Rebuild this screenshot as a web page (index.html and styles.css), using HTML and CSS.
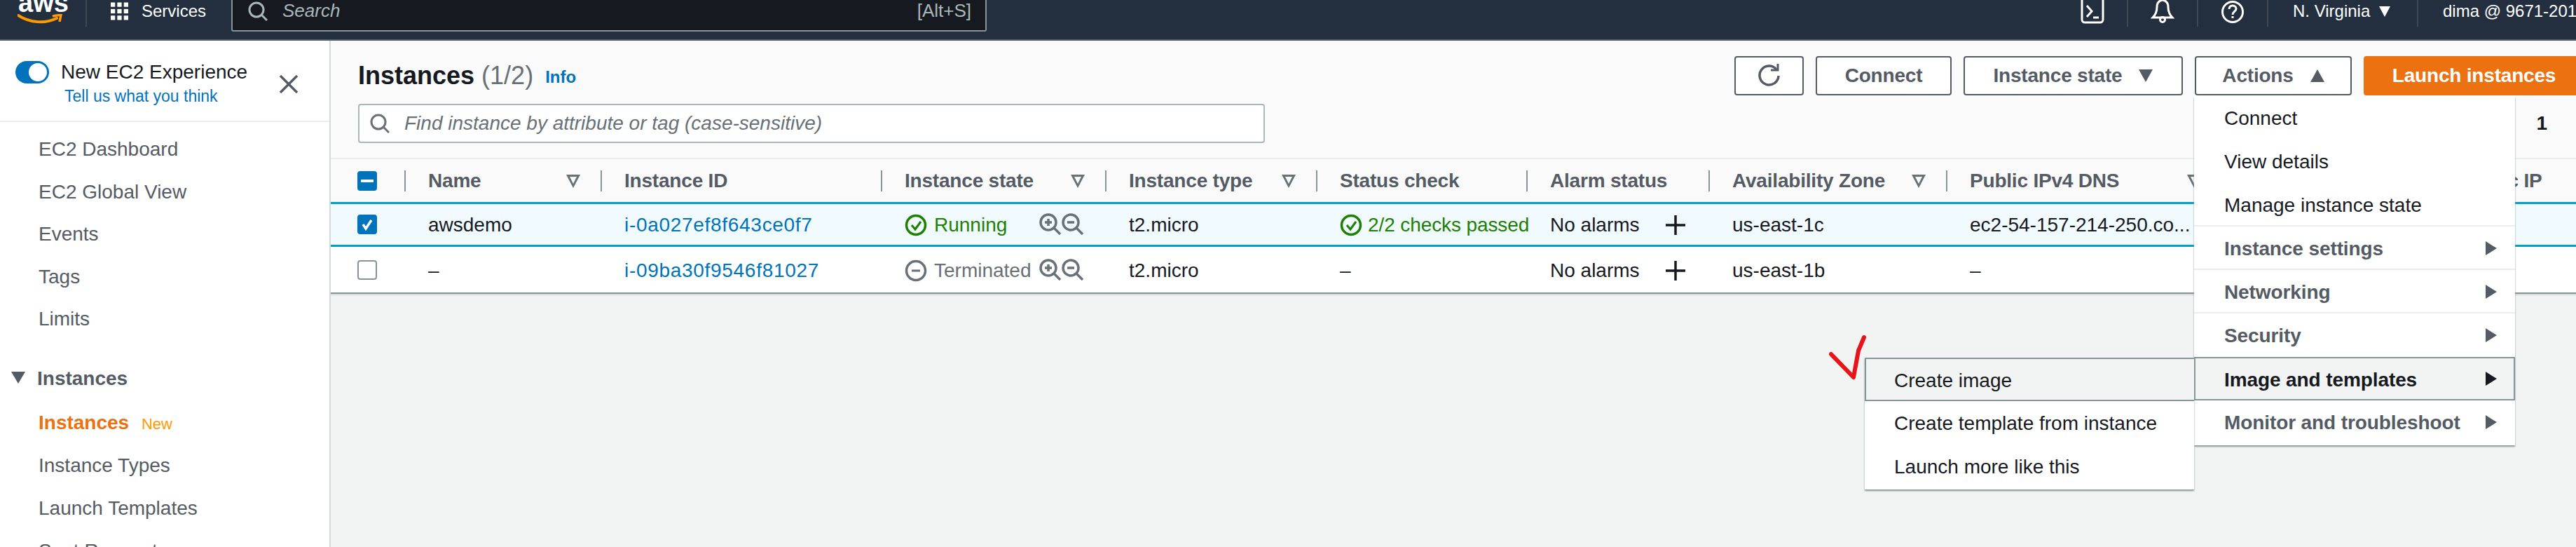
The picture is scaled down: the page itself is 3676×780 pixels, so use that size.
FILE: index.html
```html
<!DOCTYPE html>
<html>
<head>
<meta charset="utf-8" />
<title>Instances | EC2 Management Console</title>
<link rel="stylesheet" href="styles.css">
</head>
<body>

<header class="topbar">
  <div class="logo">
    <span class="logo-text">aws</span>
    <svg class="logo-smile" width="64" height="15" viewBox="0 0 64 15"><path d="M1 2C18 13 40 14 56 6" fill="none" stroke="#f90" stroke-width="4" stroke-linecap="round"/><path d="M50 3L62 1L60 11" fill="none" stroke="#f90" stroke-width="3.5"/></svg>
  </div>
  <div class="services">
    <svg width="32" height="32" viewBox="0 0 32 32" fill="#fff"><rect x="0" y="0" width="8" height="8"/><rect x="12" y="0" width="8" height="8"/><rect x="24" y="0" width="8" height="8"/><rect x="0" y="12" width="8" height="8"/><rect x="12" y="12" width="8" height="8"/><rect x="24" y="12" width="8" height="8"/><rect x="0" y="24" width="8" height="8"/><rect x="12" y="24" width="8" height="8"/><rect x="24" y="24" width="8" height="8"/></svg>
    <span>Services</span>
  </div>
  <div class="top-search">
    <svg width="28" height="28" viewBox="0 0 28 28" fill="none" stroke="#aab7b8" stroke-width="3"><circle cx="12" cy="12" r="10"/><path d="M19 19l8 8"/></svg>
    <span class="top-search-text">Search</span>
    <span class="top-search-key">[Alt+S]</span>
  </div>
  <div class="top-right">
    <div class="top-icon">
      <svg width="34" height="34" viewBox="0 0 34 34" fill="none" stroke="#fff" stroke-width="3"><rect x="2" y="-4" width="30" height="36" rx="4"/><path d="M9 8l7 8-7 8"/><path d="M18 25h8"/></svg>
    </div>
    <div class="top-icon">
      <svg width="34" height="34" viewBox="0 0 34 34" fill="none" stroke="#fff" stroke-width="3"><path d="M17 0c-6 1-8 5-8 10 0 6-1 10-6 15h28c-5-5-6-9-6-15 0-5-2-9-8-10z"/><circle cx="17" cy="28" r="3.5"/></svg>
    </div>
    <div class="top-icon">
      <svg width="34" height="34" viewBox="0 0 34 34" fill="none" stroke="#fff" stroke-width="3"><circle cx="17" cy="17" r="14.5"/><path d="M12 13c0-3 2-5 5-5s5 2 5 4.500c0 4-5 4-5 8.500"/><path d="M17 23v3"/></svg>
    </div>
    <div class="region"><span>N. Virginia</span><i class="caret-white"></i></div>
    <div class="account">dima @ 9671-2017-0000</div>
  </div>
</header>

<div class="layout">
  <aside class="sidebar">
    <div class="exp">
      <div class="exp-text">
        <div class="exp-row">
          <span class="toggle"><i></i></span>
          <span class="exp-title">New EC2 Experience</span>
        </div>
        <a class="exp-link">Tell us what you think</a>
      </div>
      <svg class="exp-close" width="28" height="26" viewBox="0 0 28 26" fill="none" stroke="#545b64" stroke-width="3.500"><path d="M2 1l24 24M26 1L2 25"/></svg>
    </div>
    <nav class="nav">
      <a class="nav-item">EC2 Dashboard</a>
      <a class="nav-item">EC2 Global View</a>
      <a class="nav-item">Events</a>
      <a class="nav-item">Tags</a>
      <a class="nav-item">Limits</a>
      <div class="nav-group"><i class="caret-nav"></i><span>Instances</span></div>
      <a class="nav-sub active">Instances <span class="new">New</span></a>
      <a class="nav-sub">Instance Types</a>
      <a class="nav-sub">Launch Templates</a>
      <a class="nav-sub">Spot Requests</a>
    </nav>
  </aside>

  <main class="content">
    <section class="panel-top">
      <div class="title-row">
        <h1>Instances <span class="count">(1/2)</span></h1>
        <a class="info">Info</a>
        <div class="actions">
          <button class="btn btn-refresh" type="button">
            <svg width="34" height="34" viewBox="0 0 34 34" fill="none" stroke="#545b64" stroke-width="3.500"><path d="M27 8a13.500 13.500 0 1 0 3 9"/><path d="M19 9h10V0" stroke-width="3"/></svg>
          </button>
          <button class="btn btn-connect" type="button">Connect</button>
          <button class="btn btn-state" type="button">Instance state <i class="caret-down"></i></button>
          <button class="btn btn-actions" type="button">Actions <i class="caret-up"></i></button>
          <button class="btn btn-launch" type="button">Launch instances</button>
        </div>
      </div>
      <div class="filter-row">
        <div class="filter">
          <svg width="28" height="28" viewBox="0 0 28 28" fill="none" stroke="#687078" stroke-width="3"><circle cx="12" cy="12" r="10"/><path d="M19 19l8 8"/></svg>
          <span>Find instance by attribute or tag (case-sensitive)</span>
        </div>
        <span class="page-num">1</span>
      </div>
    </section>

    <section class="table">
      <div class="row head">
        <div class="cell cell-check"><span class="check mixed"><i></i></span></div>
        <div class="cell sep">Name<i class="filter-mark"></i></div>
        <div class="cell sep">Instance ID</div>
        <div class="cell sep">Instance state<i class="filter-mark"></i></div>
        <div class="cell sep">Instance type<i class="filter-mark"></i></div>
        <div class="cell sep">Status check</div>
        <div class="cell sep">Alarm status</div>
        <div class="cell sep">Availability Zone<i class="filter-mark"></i></div>
        <div class="cell sep">Public IPv4 DNS<i class="filter-mark"></i></div>
        <div class="cell sep">Public IPv4</div>
        <div class="cell sep">Elastic IP</div>
      </div>

      <div class="row selected">
        <div class="cell cell-check"><span class="check on"><svg width="20" height="20" viewBox="0 0 20 20" fill="none" stroke="#fff" stroke-width="3.500"><path d="M4 10l4 6 8-12"/></svg></span></div>
        <div class="cell">awsdemo</div>
        <div class="cell link">i-0a027ef8f643ce0f7</div>
        <div class="cell state green">
          <svg width="32" height="32" viewBox="0 0 32 32" fill="none" stroke="#1d8102" stroke-width="3.500"><circle cx="16" cy="16" r="13.500"/><path d="M10 16l5 6 8-11" stroke-width="3"/></svg>
          <span>Running</span>
          <span class="zooms">
            <svg width="32" height="32" viewBox="0 0 32 32" fill="none" stroke="#687078" stroke-width="3.500"><circle cx="13" cy="13" r="11"/><path d="M21 21l9 9M13 8v10M8 13h10"/></svg>
            <svg width="32" height="32" viewBox="0 0 32 32" fill="none" stroke="#687078" stroke-width="3.500"><circle cx="13" cy="13" r="11"/><path d="M21 21l9 9M8 13h10"/></svg>
          </span>
        </div>
        <div class="cell">t2.micro</div>
        <div class="cell state green checks">
          <svg width="32" height="32" viewBox="0 0 32 32" fill="none" stroke="#1d8102" stroke-width="3.500"><circle cx="16" cy="16" r="13.500"/><path d="M10 16l5 6 8-11" stroke-width="3"/></svg>
          <span>2/2 checks passed</span>
        </div>
        <div class="cell alarm">No alarms<svg class="plus" width="30" height="30" viewBox="0 0 30 30" stroke="#16191f" stroke-width="3.500"><path d="M15 1v28M1 15h28"/></svg></div>
        <div class="cell">us-east-1c</div>
        <div class="cell">ec2-54-157-214-250.co...</div>
        <div class="cell"></div>
        <div class="cell"></div>
      </div>

      <div class="row last">
        <div class="cell cell-check"><span class="check"></span></div>
        <div class="cell">–</div>
        <div class="cell link">i-09ba30f9546f81027</div>
        <div class="cell state grey">
          <svg width="32" height="32" viewBox="0 0 32 32" fill="none" stroke="#687078" stroke-width="3.500"><circle cx="16" cy="16" r="13.500"/><path d="M10 16h12" stroke-width="3"/></svg>
          <span>Terminated</span>
          <span class="zooms">
            <svg width="32" height="32" viewBox="0 0 32 32" fill="none" stroke="#687078" stroke-width="3.500"><circle cx="13" cy="13" r="11"/><path d="M21 21l9 9M13 8v10M8 13h10"/></svg>
            <svg width="32" height="32" viewBox="0 0 32 32" fill="none" stroke="#687078" stroke-width="3.500"><circle cx="13" cy="13" r="11"/><path d="M21 21l9 9M8 13h10"/></svg>
          </span>
        </div>
        <div class="cell">t2.micro</div>
        <div class="cell">–</div>
        <div class="cell alarm">No alarms<svg class="plus" width="30" height="30" viewBox="0 0 30 30" stroke="#16191f" stroke-width="3.500"><path d="M15 1v28M1 15h28"/></svg></div>
        <div class="cell">us-east-1b</div>
        <div class="cell">–</div>
        <div class="cell"></div>
        <div class="cell"></div>
      </div>
    </section>
  </main>
</div>

<!-- actions dropdown, open on "Image and templates" -->
<div class="menu">
  <a class="menu-item">Connect</a>
  <a class="menu-item">View details</a>
  <a class="menu-item divided">Manage instance state</a>
  <a class="menu-item parent divided">Instance settings<i class="caret-right"></i></a>
  <a class="menu-item parent divided">Networking<i class="caret-right"></i></a>
  <a class="menu-item parent">Security<i class="caret-right"></i></a>
  <a class="menu-item parent open">Image and templates<i class="caret-right"></i></a>
  <a class="menu-item parent">Monitor and troubleshoot<i class="caret-right"></i></a>

  <div class="submenu">
    <a class="menu-item hover">Create image</a>
    <a class="menu-item">Create template from instance</a>
    <a class="menu-item">Launch more like this</a>
  </div>
</div>

<svg class="red-check" width="54" height="66" viewBox="0 0 54 66" fill="none" stroke="#e8141a" stroke-width="6" stroke-linecap="round" stroke-linejoin="round"><path d="M3 27L35 60L42 22L50 3"/></svg>

</body>
</html>
```

FILE: styles.css
```css
html, body {
  margin: 0;
  padding: 0;
  width: 3676px;
  height: 780px;
  overflow: hidden;
  background: #f2f3f3;
  font-family: "Liberation Sans", Arial, sans-serif;
  font-size: 28px;
  color: #16191f;
}
body {
  position: relative;
}
a { display: block; }
i { display: block; }

/* top bar */
.topbar {
  display: flex;
  height: 56px;
  background: #232f3e;
  border-bottom: 2px solid #545b64;
  color: #fff;
  font-size: 24px;
}
.logo {
  position: relative;
  width: 122px;
  height: 38px;
  border-right: 2px solid #414750;
  flex-shrink: 0;
}
.logo-text {
  position: absolute;
  left: 26px;
  top: -15px;
  font-size: 38px;
  line-height: 38px;
  font-weight: bold;
}
.logo-smile {
  position: absolute;
  left: 25px;
  top: 20px;
}
.services {
  display: flex;
  align-items: center;
  gap: 19px;
  width: 170px;
  height: 32px;
  padding-left: 34px;
  box-sizing: border-box;
  flex-shrink: 0;
}
.top-search {
  display: flex;
  align-items: center;
  width: 1078px;
  height: 45px;
  box-sizing: border-box;
  padding: 0 20px 12px 22px;
  background: #16191f;
  border: 2px solid #879596;
  border-top: none;
  border-radius: 0 0 3px 3px;
  color: #aab7b8;
  font-size: 26px;
  flex-shrink: 0;
  margin-left: 36px;
}
.top-search-text {
  font-style: italic;
  margin-left: 21px;
  flex: 1;
}
.top-right {
  display: flex;
  margin-left: auto;
  height: 38px;
}
.top-icon {
  width: 100px;
  height: 38px;
  box-sizing: border-box;
  border-right: 2px solid #414750;
  display: flex;
  justify-content: center;
  align-items: flex-start;
  margin-right: 0;
}
.region {
  display: flex;
  gap: 13px;
  align-items: center;
  width: 214px;
  height: 38px;
  padding: 0 0 6px 35px;
  box-sizing: border-box;
  border-right: 2px solid #414750;
}
.account {
  width: 225px;
  padding-left: 35px;
  box-sizing: border-box;
  white-space: nowrap;
  overflow: hidden;
  line-height: 32px;
}
.caret-white {
  width: 0;
  height: 0;
  border-left: 8px solid transparent;
  border-right: 8px solid transparent;
  border-top: 15px solid #fff;
}

.layout {
  display: flex;
  height: 722px;
}

/* left nav */
.sidebar {
  width: 472px;
  box-sizing: border-box;
  flex-shrink: 0;
  background: #fff;
  border-right: 2px solid #d5dbdb;
  color: #545b64;
}
.exp {
  display: flex;
  height: 116px;
  box-sizing: border-box;
  padding: 28px 0 0 22px;
  border-bottom: 2px solid #eaeded;
}
.exp-text {
  width: 376px;
}
.exp-row {
  display: flex;
  align-items: center;
  gap: 17px;
  height: 34px;
}
.toggle {
  display: block;
  position: relative;
  width: 48px;
  height: 32px;
  border-radius: 16px;
  background: #0073bb;
}
.toggle i {
  position: absolute;
  right: 3px;
  top: 3px;
  width: 26px;
  height: 26px;
  border-radius: 50%;
  background: #fff;
}
.exp-title {
  color: #16191f;
}
.exp-link {
  margin: 2px 0 0 70px;
  color: #0073bb;
  font-size: 23px;
  line-height: 30px;
}
.exp-close {
  margin-top: 21px;
}
.nav {
  padding-top: 7px;
}
.nav-item {
  height: 60.5px;
  line-height: 63px;
  padding-left: 55px;
}
.nav-group {
  display: flex;
  align-items: center;
  gap: 17px;
  height: 62px;
  margin: 24px 0 1px;
  padding-left: 16px;
  font-weight: bold;
}
.nav-group span {
  padding-top: 2px;
}
.caret-nav {
  width: 0;
  height: 0;
  border-left: 10px solid transparent;
  border-right: 10px solid transparent;
  border-top: 17px solid #545b64;
}
.nav-sub {
  height: 61px;
  line-height: 64px;
  padding-left: 55px;
}
.active {
  color: #ec7211;
  font-weight: bold;
}
.new {
  margin-left: 10px;
  font-size: 22px;
  font-weight: normal;
  color: #f90;
}

/* main */
.content {
  flex: 1;
  min-width: 0;
}
.panel-top {
  height: 169px;
  box-sizing: border-box;
  padding: 22px 0 0 39px;
  background: #fafafa;
  border-bottom: 2px solid #eaeded;
}
.title-row {
  display: flex;
  align-items: center;
  height: 56px;
}
h1 {
  margin: 0;
  font-size: 36px;
  font-weight: bold;
  white-space: nowrap;
}
.count {
  font-weight: normal;
  color: #687078;
}
.info {
  margin: 4px 0 0 17px;
  font-size: 24px;
  font-weight: bold;
  color: #0073bb;
}
.actions {
  display: flex;
  gap: 17px;
  margin-left: auto;
  margin-right: -12px;
}
.btn {
  display: flex;
  align-items: center;
  justify-content: center;
  gap: 24px;
  height: 56px;
  box-sizing: border-box;
  padding: 0;
  background: #fff;
  border: 2px solid #545b64;
  border-radius: 4px;
  font: bold 28px "Liberation Sans", Arial, sans-serif;
  letter-spacing: -0.2px;
  color: #545b64;
  white-space: nowrap;
}
.btn-refresh { width: 99px; }
.btn-connect { width: 194px; }
.btn-state { width: 313px; }
.btn-actions { width: 224px; }
.btn-launch {
  width: 315px;
  background: #ec7211;
  border-color: #ec7211;
  color: #fff;
}
.caret-down {
  width: 0;
  height: 0;
  border-left: 10px solid transparent;
  border-right: 10px solid transparent;
  border-top: 18px solid #545b64;
}
.caret-up {
  width: 0;
  height: 0;
  border-left: 10px solid transparent;
  border-right: 10px solid transparent;
  border-bottom: 18px solid #545b64;
}
.filter-row {
  display: flex;
  align-items: center;
  justify-content: space-between;
  margin-top: 12px;
  padding-right: 41px;
}
.filter {
  display: flex;
  align-items: center;
  gap: 21px;
  width: 1294px;
  height: 56px;
  box-sizing: border-box;
  padding-left: 15px;
  background: #fff;
  border: 2px solid #aab7b8;
  border-radius: 4px;
  font-style: italic;
  color: #687078;
}
.page-num {
  font-weight: bold;
  color: #16191f;
}

/* instances table */
.row {
  display: grid;
  grid-template-columns: 105px 280px 400px 320px 301px 300px 260px 339px 393px 301px 300px;
  background: #fff;
  height: 63px;
  box-sizing: border-box;
  align-items: center;
}
.head {
  height: 61px;
  background: #fafafa;
  font-weight: bold;
  letter-spacing: -0.2px;
  color: #545b64;
}
.selected {
  height: 64px;
  background: #f1faff;
  border-top: 3px solid #00a1c9;
  border-bottom: 3px solid #00a1c9;
}
.last {
  height: 67px;
  border-bottom: 2px solid #879596;
  box-shadow: 0 2px 1px #d5dbdb;
}
.cell {
  display: flex;
  align-items: center;
  position: relative;
  padding-left: 34px;
  box-sizing: border-box;
  white-space: nowrap;
}
.selected .cell, .last .cell {
  padding-top: 2px;
}
.selected .cell-check, .last .cell-check {
  padding-top: 0;
}
.cell-check {
  padding-left: 38px;
}
.sep {
  height: 30px;
  border-left: 2px solid #879596;
  padding-left: 32px;
}
.check {
  display: flex;
  align-items: center;
  justify-content: center;
  width: 28px;
  height: 28px;
  box-sizing: border-box;
  background: #fff;
  border: 2px solid #879596;
  border-radius: 4px;
}
.on, .mixed {
  background: #0073bb;
  border-color: #0073bb;
}
.mixed i {
  width: 18px;
  height: 4px;
  background: #fff;
}
.filter-mark {
  position: absolute;
  right: 29px;
  top: 6px;
  width: 0;
  height: 0;
  border-left: 10px solid transparent;
  border-right: 10px solid transparent;
  border-top: 19px solid #687078;
}
.filter-mark::after {
  content: "";
  position: absolute;
  left: -5px;
  top: -16px;
  width: 0;
  height: 0;
  border-left: 5px solid transparent;
  border-right: 5px solid transparent;
  border-top: 10px solid #fafafa;
}
.link {
  color: #0073bb;
  letter-spacing: 0.7px;
}
.state {
  gap: 10px;
}
.state svg {
  flex-shrink: 0;
}
.checks {
  gap: 8px;
  letter-spacing: -0.1px;
}
.green { color: #1d8102; }
.grey { color: #687078; }
.zooms {
  position: absolute;
  left: 226px;
  top: 50%;
  margin-top: -16px;
  display: flex;
  height: 32px;
}
.alarm {
  justify-content: flex-start;
}
.plus {
  margin-left: 36px;
}

/* dropdown */
.menu {
  position: absolute;
  left: 3131px;
  top: 137px;
  width: 458px;
  padding-bottom: 2px;
  background: #fff;
  box-shadow: 0 2px 2px #879596;
}
.menu-item {
  position: relative;
  height: 62px;
  line-height: 63px;
  box-sizing: border-box;
  padding-left: 43px;
  white-space: nowrap;
}
.divided {
  border-bottom: 2px solid #eaeded;
}
.parent {
  font-weight: bold;
  letter-spacing: -0.1px;
  color: #545b64;
}
.open, .hover {
  background: #f2f3f3;
  border: 2px solid #879596;
  padding-left: 41px;
  line-height: 61px;
  color: #16191f;
}
.caret-right {
  position: absolute;
  right: 26px;
  top: 21px;
  width: 0;
  height: 0;
  border-top: 10px solid transparent;
  border-bottom: 10px solid transparent;
  border-left: 16px solid #545b64;
}
.open .caret-right {
  right: 24px;
  top: 19px;
  border-left-color: #16191f;
}
.submenu {
  position: absolute;
  right: 100%;
  top: 373px;
  width: 470px;
  padding-bottom: 2px;
  background: #fff;
  box-shadow: 0 2px 2px #879596;
}
.submenu .menu-item {
  padding-left: 42px;
}
.submenu .hover {
  padding-left: 40px;
  border-right: none;
}
.red-check {
  position: absolute;
  left: 2610px;
  top: 478px;
}
```
